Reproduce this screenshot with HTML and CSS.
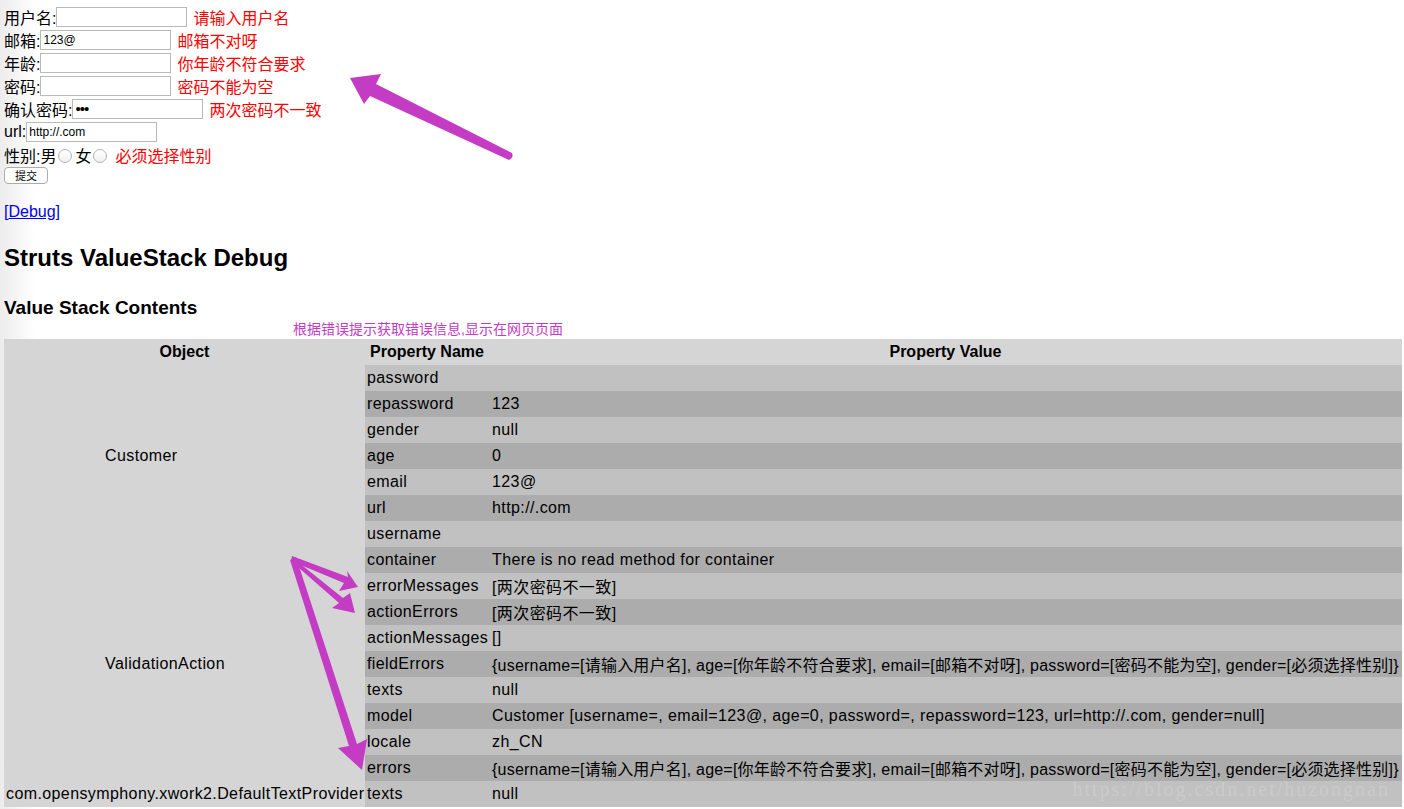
FILE: index.html
```html
<!DOCTYPE html>
<html lang="zh-CN">
  <head>
    <meta charset="UTF-8">
    <title>Struts ValueStack Debug</title>
    <link rel="stylesheet" href="styles.css">
  </head>
  <body>
    <form class="signup">
      <div class="field">用户名:<input type="text"><span class="error">请输入用户名</span></div>
      <div class="field">邮箱:<input type="text" value="123@"><span class="error">邮箱不对呀</span></div>
      <div class="field">年龄:<input type="text"><span class="error">你年龄不符合要求</span></div>
      <div class="field">密码:<input type="password"><span class="error">密码不能为空</span></div>
      <div class="field">确认密码:<input type="password" value="123"><span class="error">两次密码不一致</span></div>
      <div class="field">url:<input type="text" value="http://.com"></div>
      <div class="field">性别:男<input type="radio" name="gender">女<input type="radio" name="gender"><span class="error">必须选择性别</span></div>
      <button type="button">提交</button>
    </form>

    <p class="debugLink">[<a href="#">Debug</a>]</p>

    <h2>Struts ValueStack Debug</h2>
    <h3>Value Stack Contents</h3>
    <p class="note">根据错误提示获取错误信息,显示在网页页面</p>

    <table class="stack">
      <colgroup>
        <col class="colObject">
        <col class="colName">
        <col>
      </colgroup>
      <tr class="head">
        <th>Object</th>
        <th>Property Name</th>
        <th>Property Value</th>
      </tr>
      <tr class="odd">
        <td class="object" rowspan="7">Customer</td>
        <td>password</td><td class="value"></td>
      </tr>
      <tr class="even"><td>repassword</td><td class="value">123</td></tr>
      <tr class="odd"><td>gender</td><td class="value">null</td></tr>
      <tr class="even"><td>age</td><td class="value">0</td></tr>
      <tr class="odd"><td>email</td><td class="value">123@</td></tr>
      <tr class="even"><td>url</td><td class="value">http://.com</td></tr>
      <tr class="odd"><td>username</td><td class="value"></td></tr>
      <tr class="even">
        <td class="object" rowspan="9">ValidationAction</td>
        <td>container</td><td class="value">There is no read method for container</td>
      </tr>
      <tr class="odd"><td>errorMessages</td><td class="value">[两次密码不一致]</td></tr>
      <tr class="even"><td>actionErrors</td><td class="value">[两次密码不一致]</td></tr>
      <tr class="odd"><td>actionMessages</td><td class="value">[]</td></tr>
      <tr class="even"><td>fieldErrors</td><td class="value map">{username=[请输入用户名], age=[你年龄不符合要求], email=[邮箱不对呀], password=[密码不能为空], gender=[必须选择性别]}</td></tr>
      <tr class="odd"><td>texts</td><td class="value">null</td></tr>
      <tr class="even"><td>model</td><td class="value">Customer [username=, email=123@, age=0, password=, repassword=123, url=http://.com, gender=null]</td></tr>
      <tr class="odd"><td>locale</td><td class="value">zh_CN</td></tr>
      <tr class="even"><td>errors</td><td class="value map">{username=[请输入用户名], age=[你年龄不符合要求], email=[邮箱不对呀], password=[密码不能为空], gender=[必须选择性别]}</td></tr>
      <tr class="odd">
        <td class="object provider">com.opensymphony.xwork2.DefaultTextProvider</td>
        <td>texts</td><td class="value">null</td>
      </tr>
    </table>

    <div class="watermark">https://blog.csdn.net/huzongnan</div>

    <!-- annotation arrows drawn over the screenshot -->
    <svg class="arrows" width="1404" height="809" viewBox="0 0 1404 809">
      <path d="M350 78 L381 74 L376 84 L512 153 Q514 158 509 160 L370 96 L364 104 Z" />
      <path d="M292 556 L348 577 L347 571 L358 587 L339 591 L344 583 L291 561 Z" />
      <path d="M293 558 L343 598 L350 593 L355 613 L332 608 L339 603 L291 561 Z" />
      <path d="M290 560 L349 746 L338 748 L362 770 L367 739 L357 744 L296 557 Z" />
    </svg>
  </body>
</html>
```

FILE: styles.css
```css
html {
  font-family: "Liberation Sans", "Noto Sans CJK SC", sans-serif;
  font-size: 16px;
}

body {
  background: linear-gradient(to right, #ececec 0, #fff 36px);
  color: #000;
  margin: 0;
  min-height: 809px;
  padding: 5px 2px 0 4px;
  position: relative;
}

.field {
  align-items: center;
  display: flex;
  height: 23px;
  white-space: nowrap;
}

.field input[type=text],
.field input[type=password] {
  background: #fff;
  border: 1px solid #b9b9b9;
  box-sizing: border-box;
  font-family: "Liberation Sans", sans-serif;
  font-size: 12px;
  height: 20px;
  margin: 0;
  padding: 0 2px;
  width: 131px;
}

.field input[type=password] {
  font-size: 15px;
  letter-spacing: -1px;
}

.field input[type=radio] {
  -webkit-appearance: none;
  appearance: none;
  background: linear-gradient(#fff, #f0f0f0);
  border: 1px solid #b3b3b3;
  border-radius: 50%;
  height: 14px;
  margin: 2px 3px 0 2px;
  width: 14px;
}

.error {
  color: #ff0000;
  margin-left: 6px;
}

.field input[type=radio] + .error {
  margin-left: 5px;
}

button {
  background: #fff;
  border: 1px solid #acacac;
  border-radius: 4px;
  font-family: "Noto Sans CJK SC", sans-serif;
  font-size: 11px;
  height: 17px;
  line-height: 15px;
  margin: -1px 0 0;
  padding: 0;
  width: 44px;
}

.debugLink {
  color: #0000ee;
  line-height: 20px;
  margin: 18px 0 0;
}

.debugLink a {
  color: #0000ee;
}

h2 {
  font-size: 24px;
  line-height: 28px;
  margin: 22px 0 0;
}

h3 {
  font-size: 19px;
  line-height: 22px;
  margin: 25px 0 0;
}

.note {
  color: #c43bc4;
  font-size: 14px;
  line-height: 19px;
  margin: 1px 0 0 289px;
}

.stack {
  background: #d5d5d5;
  border-collapse: collapse;
  table-layout: fixed;
  width: 100%;
}

.colObject {
  width: 361px;
}

.colName {
  width: 124px;
}

.stack th,
.stack td {
  height: 26px;
  overflow: hidden;
  padding: 0 2px;
  white-space: nowrap;
}

.stack th {
  font-weight: bold;
  text-align: center;
}

.stack td {
  letter-spacing: 0.4px;
  text-align: left;
}

.stack .value {
  padding-left: 3px;
}

.stack td.map {
  letter-spacing: 0.22px;
}

.stack .odd td {
  background: #c1c1c1;
}

.stack .even td {
  background: #acacac;
}

.stack tr td.object {
  background: #d5d5d5;
  padding-left: 101px;
}

.stack tr td.provider {
  padding-left: 2px;
}

.watermark {
  color: rgba(255, 255, 255, 0.18);
  font-family: "Liberation Serif", serif;
  font-size: 20px;
  letter-spacing: 2px;
  position: absolute;
  right: 14px;
  top: 778px;
}

.arrows {
  fill: #c43bc4;
  left: 0;
  pointer-events: none;
  position: absolute;
  top: 0;
}
```
